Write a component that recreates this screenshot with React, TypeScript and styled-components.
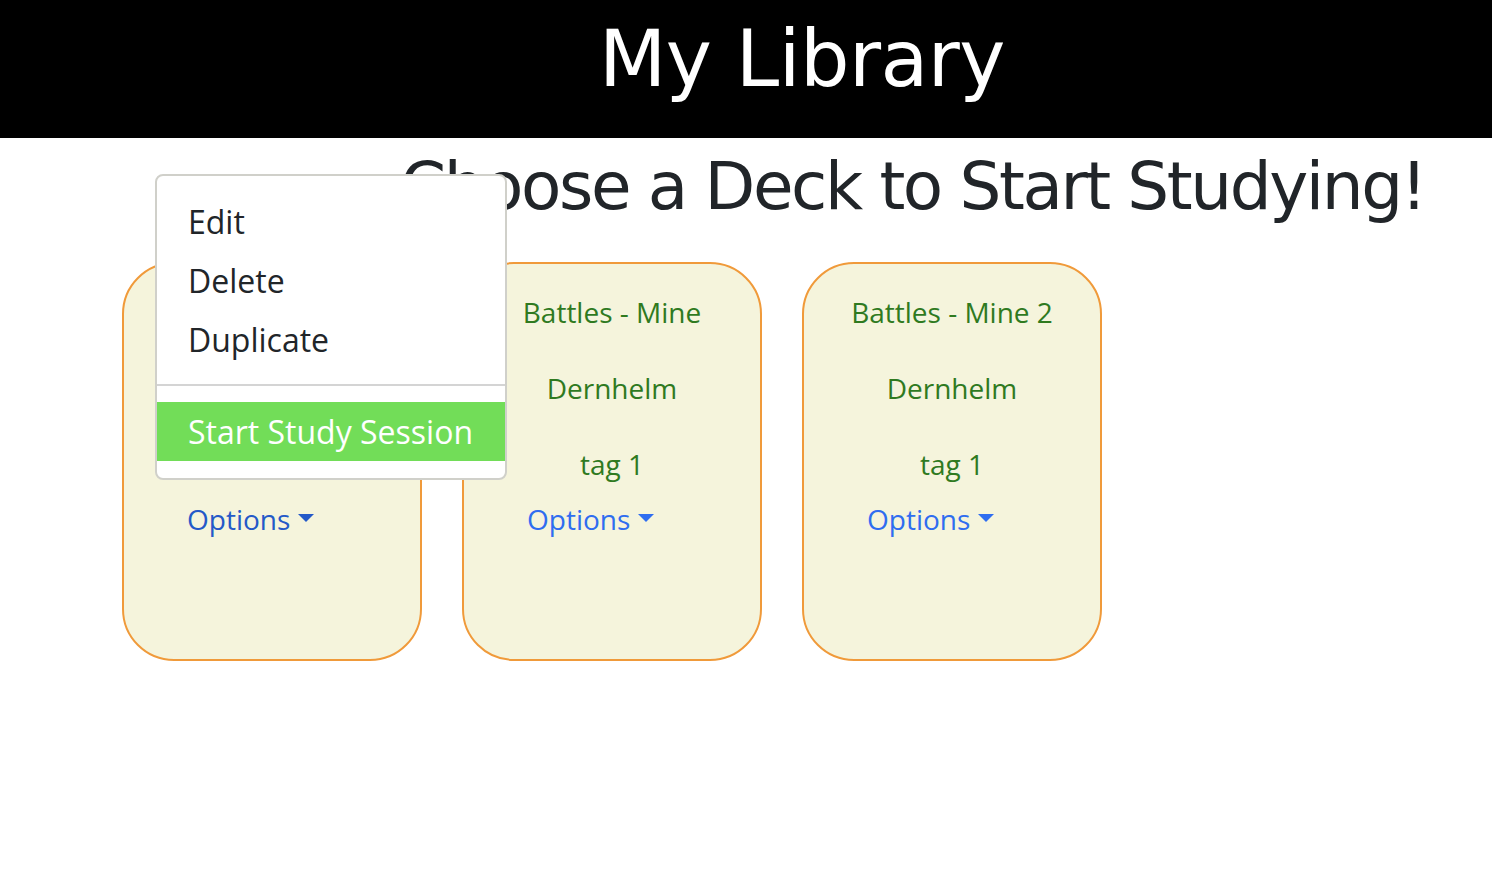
import React from "react";
import styled, { createGlobalStyle } from "styled-components";

const GlobalStyle = createGlobalStyle`
  html, body { margin: 0; padding: 0; background: #ffffff; }
  body { font-family: "Open Sans", "Liberation Sans", sans-serif; color: #212529; }
  * { box-sizing: border-box; }
`;

const Header = styled.header`
  height: 138px;
  background: #000000;
  display: flex;
  align-items: center;
  justify-content: center;
  padding-left: 112px;
`;

const Title = styled.h1`
  margin: 0;
  padding-bottom: 20px;
  font-family: "DejaVu Sans", sans-serif;
  font-weight: 400;
  font-size: 78px;
  letter-spacing: -0.5px;
  line-height: 1;
  color: #ffffff;
`;

const Subtitle = styled.h2`
  margin: 0;
  padding: 16px 0 0 400px;
  height: 124px;
  font-family: "DejaVu Sans", sans-serif;
  font-weight: 400;
  font-size: 66px;
  letter-spacing: -2.4px;
  line-height: 1;
  color: #212529;
  white-space: nowrap;
`;

const DeckRow = styled.div`
  display: flex;
  gap: 40px;
  padding-left: 122px;
`;

const Card = styled.div`
  position: relative;
  width: 300px;
  height: 399px;
  background: #f5f4dc;
  border: 2px solid #f09a3a;
  border-radius: 52px;
  display: flex;
  flex-direction: column;
  align-items: center;
  padding-top: 28px;
`;

const CardLine = styled.p`
  margin: 0 0 36px 0;
  height: 40px;
  line-height: 40px;
  font-size: 28px;
  color: #2f7a1f;
  text-align: center;
`;

const OptionsButton = styled.button<{ $active?: boolean }>`
  align-self: flex-start;
  margin: -21px 0 0 63px;
  padding: 0;
  height: 40px;
  border: none;
  background: transparent;
  font-family: "Open Sans", sans-serif;
  font-size: 28px;
  line-height: 40px;
  color: ${(p) => (p.$active ? "#2459c8" : "#2f6df0")};
  display: flex;
  align-items: center;
  gap: 8px;
  cursor: pointer;
`;

const Caret = styled.span`
  width: 0;
  height: 0;
  border-left: 8px solid transparent;
  border-right: 8px solid transparent;
  border-top: 8px solid currentColor;
  margin-top: -2px;
`;

const Menu = styled.div`
  position: absolute;
  left: 31px;
  top: -90px;
  width: 352px;
  background: #ffffff;
  border: 2px solid #d0d0ca;
  border-radius: 8px;
  padding: 16px 0 17px 0;
  display: flex;
  flex-direction: column;
  z-index: 5;
`;

const MenuItem = styled.div<{ $highlight?: boolean }>`
  height: 59px;
  line-height: 59px;
  padding-left: 31px;
  font-size: 32px;
  color: ${(p) => (p.$highlight ? "#ffffff" : "#212529")};
  background: ${(p) => (p.$highlight ? "#72dd58" : "transparent")};
  white-space: nowrap;
`;

const Divider = styled.hr`
  margin: 15px 0 16px 0;
  border: none;
  border-top: 2px solid #d4d4d4;
`;

type Deck = { name: string; author: string; tag: string; open?: boolean };

const decks: Deck[] = [
  { name: "Battles", author: "Dernhelm", tag: "", open: true },
  { name: "Battles - Mine", author: "Dernhelm", tag: "tag 1" },
  { name: "Battles - Mine 2", author: "Dernhelm", tag: "tag 1" },
];

export default function App() {
  return (
    <>
      <GlobalStyle />
      <Header>
        <Title>My Library</Title>
      </Header>
      <Subtitle>Choose a Deck to Start Studying!</Subtitle>
      <DeckRow>
        {decks.map((d, i) => (
          <Card key={i}>
            <CardLine>{d.name}</CardLine>
            <CardLine>{d.author}</CardLine>
            <CardLine>{d.tag}</CardLine>
            <OptionsButton $active={d.open}>
              Options
              <Caret />
            </OptionsButton>
            {d.open && (
              <Menu>
                <MenuItem>Edit</MenuItem>
                <MenuItem>Delete</MenuItem>
                <MenuItem>Duplicate</MenuItem>
                <Divider />
                <MenuItem $highlight>Start Study Session</MenuItem>
              </Menu>
            )}
          </Card>
        ))}
      </DeckRow>
    </>
  );
}
